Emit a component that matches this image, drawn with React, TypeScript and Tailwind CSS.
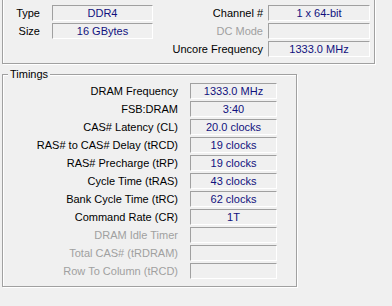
import React from 'react';

const field =
  'h-[16px] bg-[#f0f0f0] border-t border-l border-t-[#a0a0a0] border-l-[#a0a0a0] border-b border-r border-b-white border-r-white flex items-center justify-center text-[#10107e] leading-none';

const timings: { label: string; value: string; disabled?: boolean }[] = [
  { label: 'DRAM Frequency', value: '1333.0 MHz' },
  { label: 'FSB:DRAM', value: '3:40' },
  { label: 'CAS# Latency (CL)', value: '20.0 clocks' },
  { label: 'RAS# to CAS# Delay (tRCD)', value: '19 clocks' },
  { label: 'RAS# Precharge (tRP)', value: '19 clocks' },
  { label: 'Cycle Time (tRAS)', value: '43 clocks' },
  { label: 'Bank Cycle Time (tRC)', value: '62 clocks' },
  { label: 'Command Rate (CR)', value: '1T' },
  { label: 'DRAM Idle Timer', value: '', disabled: true },
  { label: 'Total CAS# (tRDRAM)', value: '', disabled: true },
  { label: 'Row To Column (tRCD)', value: '', disabled: true },
];

export default function App() {
  return (
    <div
      className="w-[392px] h-[306px] bg-[#f0f0f0] overflow-hidden text-[11px] text-black"
      style={{ fontFamily: '"Liberation Sans", Arial, sans-serif' }}
    >
      {/* General group (top edge scrolled off) */}
      <div className="ml-[2px] mt-[-10px] w-[373px] h-[74px] border border-[#a0a0a0] shadow-[inset_1px_1px_0_#fff,1px_1px_0_#fff] pt-[14px] flex flex-col gap-[2px]">
        <div className="flex items-center h-[16px]">
          <div className="w-[37px] text-right">Type</div>
          <div className={`${field} ml-[12px] w-[101px]`}>DDR4</div>
          <div className="w-[110px] text-right">Channel #</div>
          <div className={`${field} ml-[5px] w-[102px]`}>1 x 64-bit</div>
        </div>
        <div className="flex items-center h-[16px]">
          <div className="w-[37px] text-right">Size</div>
          <div className={`${field} ml-[12px] w-[101px]`}>16 GBytes</div>
          <div className="w-[110px] text-right text-[#a0a0a0]">DC Mode</div>
          <div className={`${field} ml-[5px] w-[102px]`}></div>
        </div>
        <div className="flex items-center h-[16px]">
          <div className="w-[150px]"></div>
          <div className="w-[110px] text-right">Uncore Frequency</div>
          <div className={`${field} ml-[5px] w-[102px]`}>1333.0 MHz</div>
        </div>
      </div>

      {/* Timings group */}
      <div className="relative ml-[2px] mt-[10px] w-[295px] h-[213px] border border-[#a0a0a0] shadow-[inset_1px_1px_0_#fff,1px_1px_0_#fff] pt-[8px] flex flex-col gap-[2px]">
        <span className="absolute left-[5px] top-[-7px] px-[2px] bg-[#f0f0f0] leading-[13px]">Timings</span>
        {timings.map((t) => (
          <div key={t.label} className="flex items-center h-[16px]">
            <div className={`w-[175px] text-right whitespace-nowrap ${t.disabled ? 'text-[#a0a0a0]' : ''}`}>{t.label}</div>
            <div className={`${field} ml-[12px] w-[87px]`}>{t.value}</div>
          </div>
        ))}
      </div>
    </div>
  );
}
